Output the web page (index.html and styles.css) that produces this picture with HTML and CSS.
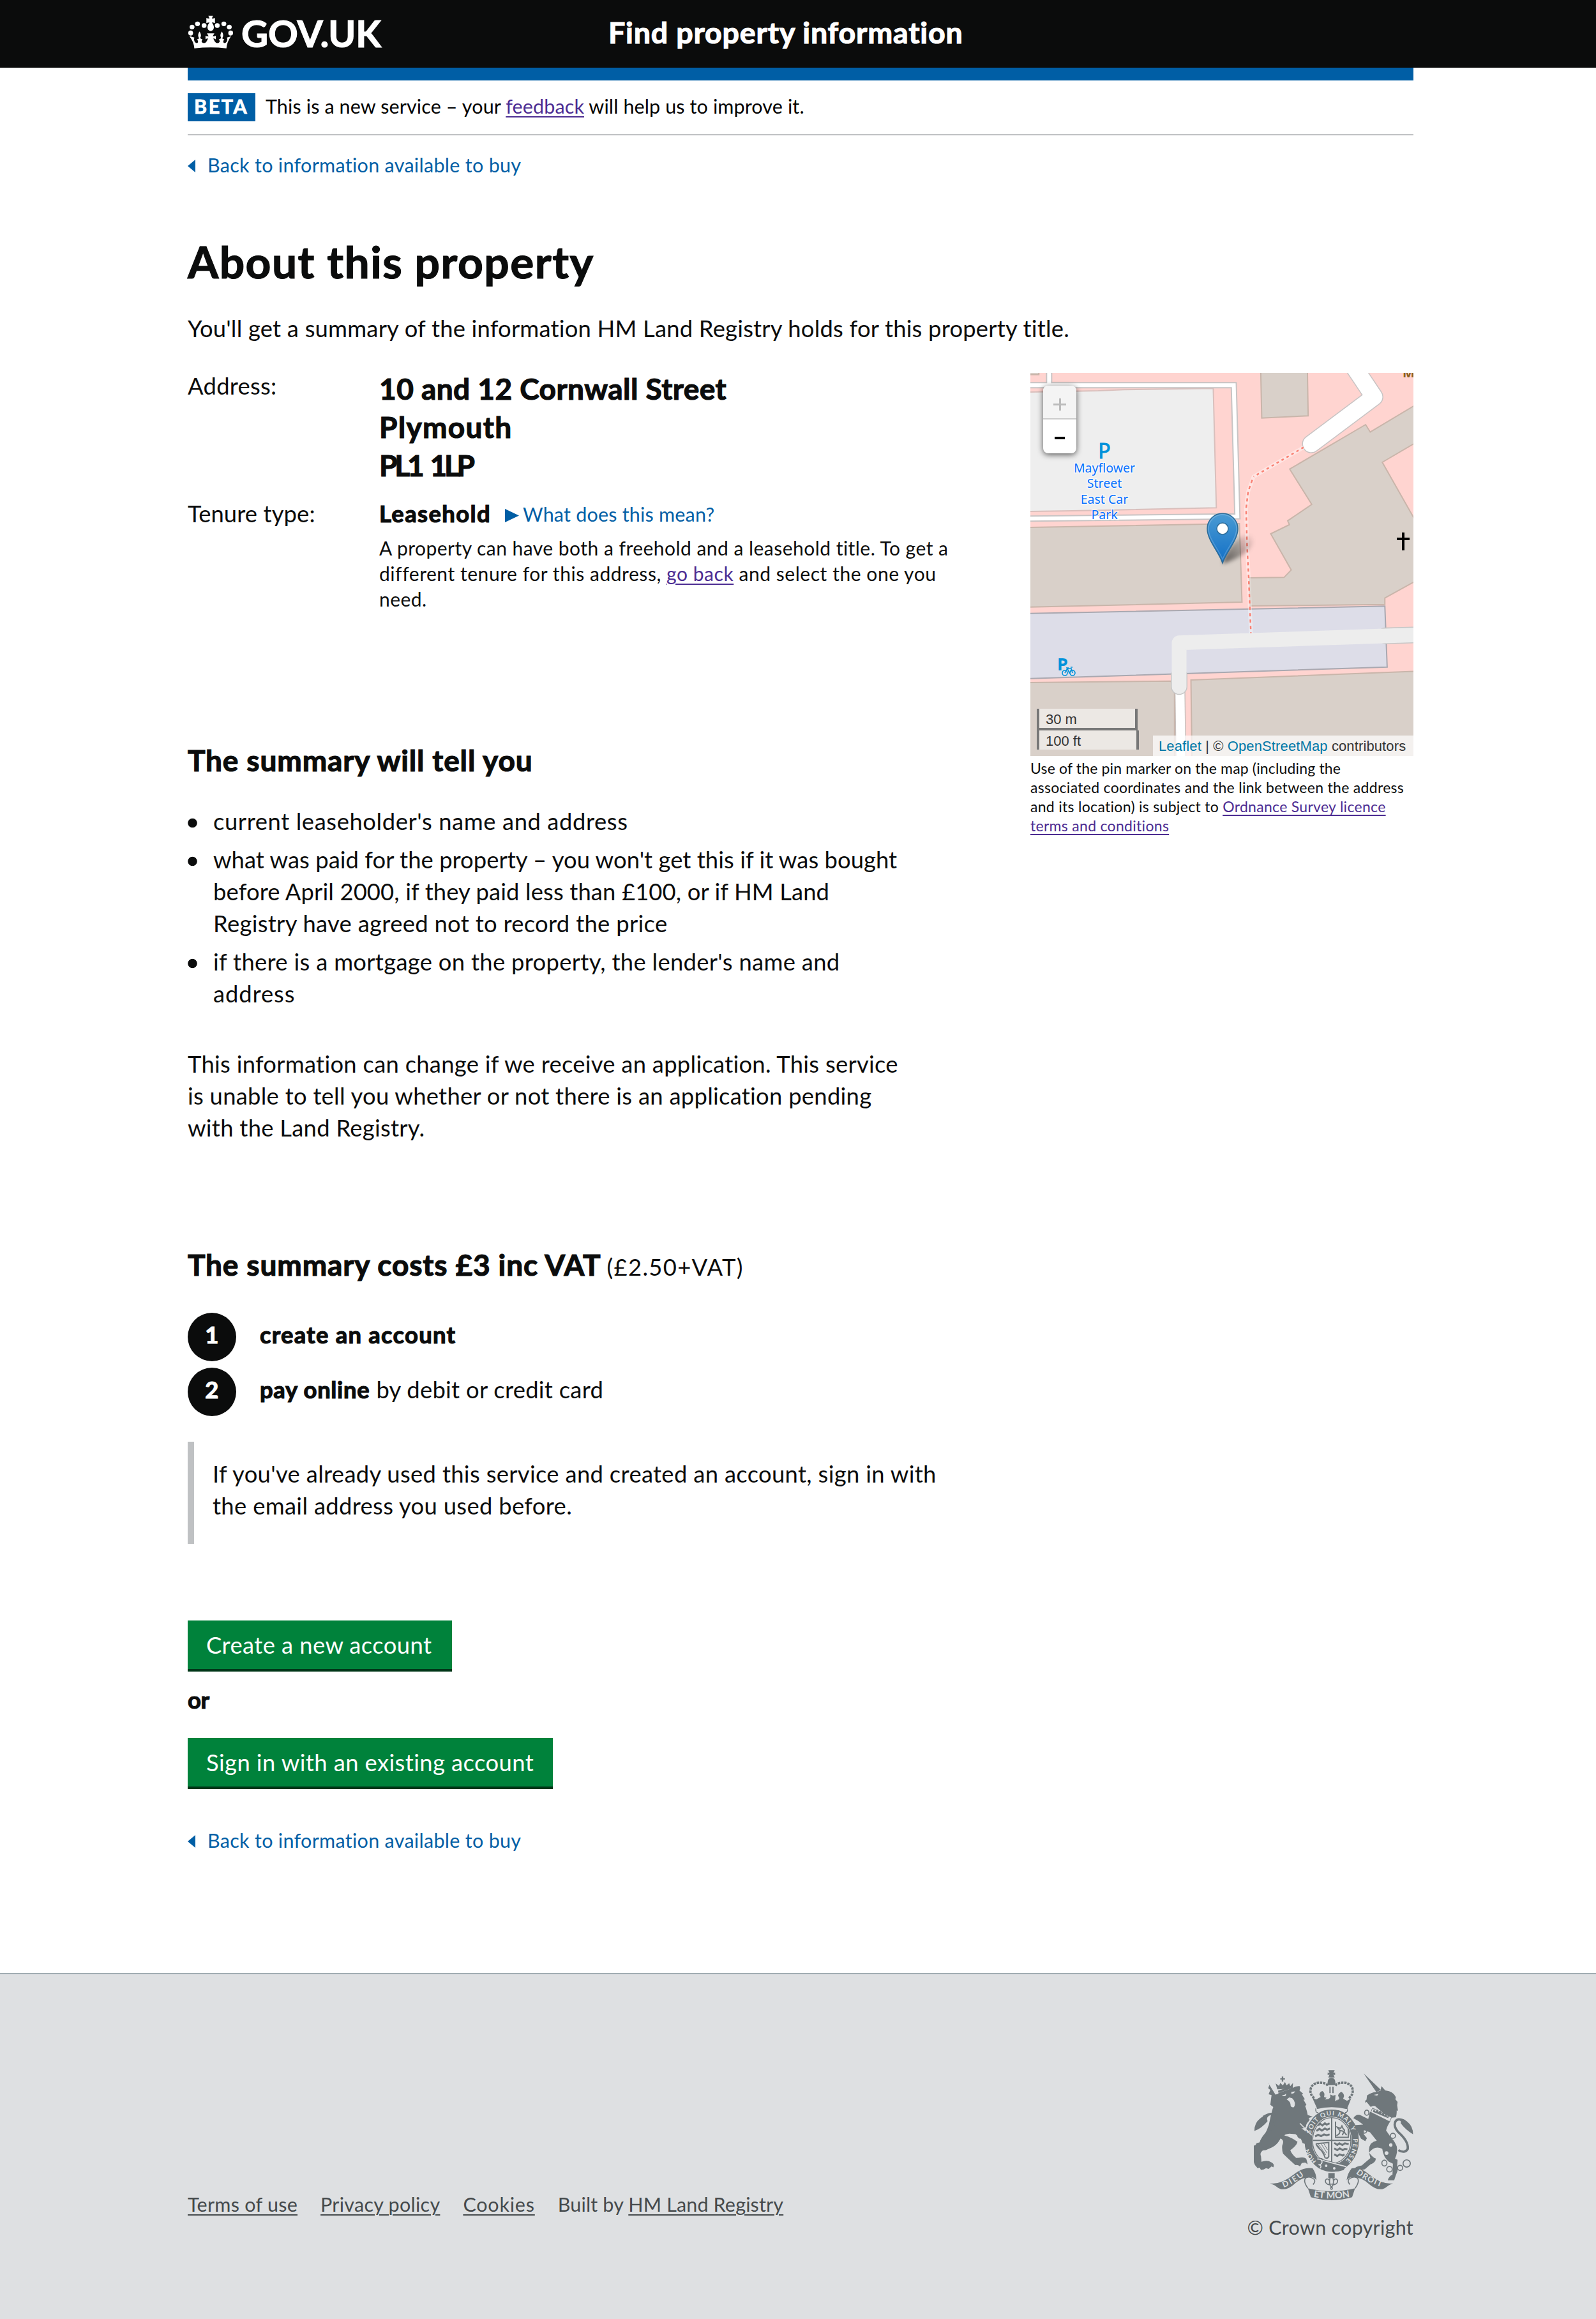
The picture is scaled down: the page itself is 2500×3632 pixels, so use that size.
FILE: index.html
```html
<!DOCTYPE html>
<html lang="en">
<head>
<meta charset="utf-8">
<title>Find property information - GOV.UK</title>
<link rel="stylesheet" href="styles.css">
</head>
<body>
<header class="header">
  <div class="logo">
    <svg class="crown" viewBox="34 73 156 156" preserveAspectRatio="none" fill="#fff">
      <path d="M104 75h16l-4 13q7 1 11-3v25q-6-4-11-3 8 14 7 25-1 12-11 15-10-3-11-15-1-11 7-25-5-1-11 3V85q4 4 11 3z"/>
      <ellipse cx="89" cy="121" rx="8.500" ry="11"/><ellipse cx="135" cy="121" rx="8.500" ry="11"/>
      <ellipse cx="66" cy="113" rx="8.500" ry="11"/><ellipse cx="158" cy="113" rx="8.500" ry="11"/>
      <ellipse cx="47" cy="128" rx="8.500" ry="11"/><ellipse cx="177" cy="128" rx="8.500" ry="11"/>
      <ellipse cx="42" cy="156" rx="8.500" ry="12"/><ellipse cx="182" cy="156" rx="8.500" ry="12"/>
      <path d="M41 172l14 5q-3 10 1 20 5 10 11 4 3-8-3-14l8-6q-8-14 1-32 9 18 2 31l9 7q-7 7-1 14 9 7 15-6l5-13q-6 0-9 4v-18q5 5 11 3l-6-13h26l-6 13q6 2 11-3v18q-3-4-9-4l5 13q6 13 15 6 6-7-1-14l9-7q-7-13 2-31 9 18 1 32l8 6q-6 6-3 14 6 6 11-4 4-10 1-20l14-5q-14 25-16 56-55-8-112 0-2-31-17-56z"/>
    </svg>
    <span class="wordmark">GOV.UK</span>
  </div>
  <span class="service">Find property information</span>
</header>

<main class="main">
  <div class="phase">
    <strong class="tag">BETA</strong>
    <span>This is a new service – your <a class="visited" href="#">feedback</a> will help us to improve it.</span>
  </div>
  <a class="back" href="#"><svg class="tri" viewBox="0 0 12 20"><path d="M0 10L12 0v20z"/></svg>Back to information available to buy</a>

  <h1 class="title">About this property</h1>
  <p class="lede">You'll get a summary of the information HM Land Registry holds for this property title.</p>

  <div class="overview">
    <dl class="facts">
      <dt>Address:</dt>
      <dd class="address">
        <span class="ln">10 and 12 Cornwall Street</span>
        <span class="ln town">Plymouth</span>
        <span class="ln postcode">PL1 1LP</span>
      </dd>
      <dt class="snug">Tenure type:</dt>
      <dd>
        <div class="tenure"><strong class="kind">Leasehold</strong><a class="what" href="#"><svg class="tri-r" viewBox="0 0 22 21"><path d="M0 0l22 10.500L0 21z"/></svg>What does this mean?</a></div>
        <p class="note">
          <span class="ln">A property can have both a freehold and a leasehold title. To get a</span>
          <span class="ln wide">different tenure for this address, <a class="visited" href="#">go back</a> and select the one you</span>
          <span class="ln">need.</span>
        </p>
      </dd>
    </dl>

    <aside class="side">
      <div class="map">
        <svg class="tiles" viewBox="0 0 600 600">
          <defs>
            <linearGradient id="pin" x1="0" y1="0" x2="0" y2="1"><stop offset="0" stop-color="#4a9bd3"/><stop offset="1" stop-color="#126fc6"/></linearGradient>
            <linearGradient id="shade" x1="0" y1="1" x2="1" y2="0"><stop offset="0" stop-color="#000" stop-opacity=".6"/><stop offset="1" stop-color="#000" stop-opacity="0"/></linearGradient>
            <filter id="soft"><feGaussianBlur stdDeviation="3"/></filter>
          </defs>
          <rect width="600" height="600" fill="#ffd4d0"/>
          <g class="geo" transform="scale(.40178 .33333) translate(-35 -42)">
            <path class="park" d="M20 132L300 126 400 121 748 115 760 676 200 690 20 693z"/>
            <g class="bld">
              <path d="M20 30H68V50H20z"/>
              <path d="M933 30H1115L1118 244 937 254z"/>
              <path d="M1540 190L1360 320 1342 285 1046 494 1132 660 1038 737 1045 755 972 798 1052 968 1024 1003 890 1005 892 1137 1417 1130V1100L1540 1018V745L1407 462 1540 368z"/>
              <path d="M20 768L850 750 860 1119 20 1143z"/>
              <path d="M20 1497L583 1490 597 1540V1860H20z"/>
              <path d="M661 1485L1540 1444V1860H665z"/>
            </g>
            <path class="plaza" d="M20 1173L1417 1138 1426 1424 20 1479z"/>
            <g class="road">
              <path class="c9" d="M20 100H828L842 716 20 727M108 30V95"/>
              <path class="c6" d="M20 100H828L842 716 20 727M108 30V95"/>
              <path class="c28" d="M1300 20L1375 155 1130 376"/>
              <path class="c26" d="M1300 20L1375 155 1130 376"/>
              <path class="c18" d="M618 1535L622 1860"/>
              <path class="c15" d="M618 1525L622 1860"/>
              <path class="halo" d="M1100 392L905 530 884 600 876 680 880 860 886 1000 895 1270"/>
              <path class="foot-a" d="M1100 392L905 530"/>
              <path class="foot-b" d="M900 545L884 600 876 680 880 860 886 1000 895 1275"/>
              <path class="g25" d="M1540 1273L1420 1277M615 1465V1516"/>
              <path class="g23" d="M1540 1273L615 1310V1516"/>
            </g>
          </g>
          <g class="church"><path d="M584 250v28M574 260h20"/></g>
          <text class="poi" x="583" y="7">M</text>
          <g class="label">
            <text class="p" x="116" y="134">P</text>
            <text x="116" y="156">Mayflower</text><text x="116" y="180">Street</text><text x="116" y="205">East Car</text><text x="116" y="229">Park</text>
          </g>
          <text class="p2" x="42" y="466">P</text>
          <g class="bike"><circle cx="54" cy="470" r="4"/><circle cx="66" cy="470" r="4"/><path d="M54 470l4-7h6l2 7M58 463l3 7 4-6M56 462h4M63 461h3"/></g>
          <path d="M301 299q6-25 28-42 22-8 20 8-6 20-48 34z" fill="url(#shade)" filter="url(#soft)"/>
          <path d="M301 298C295 280 277 262 277 244a24 24 0 0 1 48 0C325 262 307 280 301 298z" fill="url(#pin)" stroke="#2e6c97" stroke-width="1.500"/>
          <path d="M301 292C295 276 279 260 279 244a22 22 0 0 1 44 0C323 260 307 276 301 292z" fill="none" stroke="#fff" stroke-opacity=".2" stroke-width="1.500"/>
          <circle cx="301" cy="244" r="9" fill="#fff" stroke="#2e6c97" stroke-width="1.500"/>
        </svg>
        <div class="zoomer"><span class="plus"></span><span class="minus"><i></i></span></div>
        <div class="scale"><span class="m">30 m</span><span class="ft">100 ft</span></div>
        <div class="credit"><a href="#">Leaflet</a> | © <a href="#">OpenStreetMap</a> contributors</div>
      </div>
      <p class="caption">
        <span class="ln first">Use of the pin marker on the map (including the</span>
        <span class="ln">associated coordinates and the link between the address</span>
        <span class="ln">and its location) is subject to <a class="visited" href="#">Ordnance Survey licence</a></span>
        <span class="ln"><a class="visited" href="#">terms and conditions</a></span>
      </p>
    </aside>
  </div>

  <section class="tell">
    <h2>The summary will tell you</h2>
    <ul class="bullets">
      <li><span class="ln holder">current leaseholder's name and address</span></li>
      <li><span class="ln paid">what was paid for the property – you won't get this if it was bought</span>
        <span class="ln before">before April 2000, if they paid less than £100, or if HM Land</span>
        <span class="ln">Registry have agreed not to record the price</span></li>
      <li><span class="ln">if there is a mortgage on the property, the lender's name and</span>
        <span class="ln tail">address</span></li>
    </ul>
    <p class="change">
      <span class="ln">This information can change if we receive an application. This service</span>
      <span class="ln">is unable to tell you whether or not there is an application pending</span>
      <span class="ln">with the Land Registry.</span>
    </p>
  </section>

  <section class="costs">
    <h2>The summary costs £3 inc VAT<small>(£2.50+VAT)</small></h2>
    <ol class="steps">
      <li><b class="num">1</b><strong class="create-step">create an account</strong></li>
      <li><b class="num">2</b><strong class="pay-step">pay online</strong><span class="rest">by debit or credit card</span></li>
    </ol>
    <div class="inset">
      <span class="ln">If you've already used this service and created an account, sign in with</span>
      <span class="ln">the email address you used before.</span>
    </div>
  </section>

  <div class="actions">
    <a class="btn create" href="#">Create a new account</a>
    <strong class="or">or</strong>
    <a class="btn signin" href="#">Sign in with an existing account</a>
  </div>
  <a class="back last" href="#"><svg class="tri" viewBox="0 0 12 20"><path d="M0 10L12 0v20z"/></svg>Back to information available to buy</a>
</main>

<footer class="footer">
  <nav class="links">
    <a href="#">Terms of use</a>
    <a href="#">Privacy policy</a>
    <a class="cookies" href="#">Cookies</a>
    <span class="built">Built by <a href="#">HM Land Registry</a></span>
  </nav>
  <div class="copy">
    <svg class="arms" viewBox="102 65 750 613">
      <g class="fill">
        <!-- lion -->
        <path d="M215 163l68-23 2 9-67 24z"/>
        <path d="M212 156l-8-28 16 12 6-14 12 12 10-17 7 16 13-10 5 14 13-15-2 26z"/>
        <path d="M233 96h7v8h8v6h-8v10h-7v-10h-7v-6h7z"/>
        <path d="M203 181q12-2 16-8l66-24q14-9 32-8 5 10-1 20l18 16-6 4 14 22-7 2 14 24-6 6q8 18 12 42l24 8-20 6q8 6 2 14-16 16-14 28-14 10-22 6 30 20 56 44 8 26 6 44l-10-2-6 12-12-8-8 8q-6-12-2-22l-18-6-8-20q-14 0-18-16l-8-6-28-2q-20 2-24 8 36 10 62 30-4 18-34 40 8 20 28 36l24-2q18-2 24 8l6 24-12-8-16 2-8 16q-12-10-22-6-34-30-58-54-6-18-4-38 12-26-8-34-22 46-78 54-22 10-14 30 2 18 2 26 28-10 46 2 18 8 10 24l-8-4-14 12-12-4q-10 8-24 8l-6-10-10 2-12-14q-10-22-10-42l4-50 8-2 6-10 16-4q40-60 46-104 8-40 16-62l-14-10 6-46-14-4 8-20-10-8 6-16q-2-6-6-10z"/>
        <path d="M104 352q0-38 26-58 22-20 46-14-18 6-10 26-28 34-62 46z"/>
        <!-- unicorn -->
        <path d="M618 81l82 78-22 10z"/>
        <path d="M632 205l2-20q20-14 42-16l22-6 4-22 18 20q40 4 50 32l-2 10 10 12-2 16 4 26-6-2q0 22-4 32l-32 4-66-56q-12-4-20 4l-20-24-8 4 4-12z"/>
        <path d="M648 262l96 44q-16 24-20 44l24 34q14 12 26 40 6 30-8 58l12 6-2 28 2 24q-6 14-16 44l-30 0q6-20 22-26l2-52-20-10q-26-22-30-60-36-18-62 18 18 24 32 28-2 20-26 28l-26 22-28 6-26-4q10-16 40-20 28-24 40-34-14-44 2-68 14-12 28-14l-32-40-28-10-2 18 16 20-8 14-20-12-18-36-14-10-20-2q4-14 28-16l34-2q-22-18-46-30 12-20 30-16l40 20z"/>
        <path d="M851 368q0-38-28-60-18-16-42-12 16 8 12 20 22 30 58 52z"/>
        <!-- royal crown -->
        <path d="M452 66h30l-6 14 8-3v12l-8-3 6 14h-30l6-14-9 3V77l9 3z"/>
        <path d="M448 130q0-28 19-28t19 28l-4 6h-30z"/><path d="M457 144h6v30h-6zM471 144h6v30h-6z"/>
        <path d="M376 194l18 10 22-12-6-12q2-12 14-16 14 8 8 28l12 4-8 8 16-2q14-6 8-22l14 6 12-4-2 30q10-8 14-8l-4 8 10-14-6-12q2-12 16-18 12 8 12 20l-4 12 18 10 20-12-20 50H400z"/>
        <path d="M401 238q66-12 132 0l-2 10q-64-14-128 0z"/>
        <!-- scrolls -->
        <path d="M178 598q50 8 110-40 50-40 90-30 18 24 18 56-12-18-34-14-38 2-70 32-30 28-62 24-14-4-30-18z"/>
        <path d="M756 598q-50 8-110-40-44-40-84-30-20 24-24 56 14-18 36-14 38 2 70 32 32 28 62 24 14-4 30-18z"/>
        <path d="M356 622q110 28 222 0l-14 42q-96 28-194 0z"/>
        <path d="M452 550h30v24h-30z"/>
      </g>
      <g class="line">
        <path d="M146 286q44-26 54-4 8 36-28 70-50 50-38 80 20 16 50-14" stroke-width="11"/>
        <path d="M812 306q-36-20-46 6-6 20 14 44 50 44 46 80-14 24-44 6" stroke-width="11"/>
        <path d="M386 197a48 42 0 0 1-18-34c0-50 76-44 82-22M549 197a48 42 0 0 0 18-34c0-50-76-44-82-22" stroke-width="11" stroke-dasharray="11 4"/>
        <path d="M394 246q-4 18 10 20M541 246q4 18-10 20" stroke-width="5"/>
        <ellipse cx="468" cy="397" rx="111" ry="130" stroke-width="34"/>
        <path d="M356 622q-20-28-14-44 6-12 24-8 36 10 14 34M578 622q20-28 14-44-6-12-24-8-36 10-14 34" stroke-width="5"/>
        <path d="M467 562q14 16 7 44l-7 12-7-12q-7-28 7-44zM460 606q-22-4-22-20 6-16 18-2M474 606q22-4 22-20-6-16-18-2M452 602h30" stroke-width="5"/>
        <circle cx="467" cy="622" r="5" stroke-width="4"/>
        <g stroke-width="5"><ellipse cx="633" cy="266" rx="10" ry="12"/><ellipse cx="622" cy="348" rx="12" ry="14"/><circle cx="756" cy="375" r="12"/><ellipse cx="716" cy="503" rx="12" ry="14"/><circle cx="740" cy="532" r="13"/><circle cx="790" cy="526" r="12"/><circle cx="821" cy="505" r="17"/></g>
      </g>
      <!-- shield quarters -->
      <ellipse cx="468" cy="397" rx="93" ry="112" class="cut"/>
      <g class="line">
        <ellipse cx="468" cy="397" rx="90" ry="108" stroke-width="4"/>
        <path d="M468 290v212M378 396h180" stroke-width="6"/>
        <g stroke-width="9"><path d="M404 326l10-8 10 8 12-10 8 6 14-6M396 352l14-10 12 8 14-10 10 6 14-6M390 378l14-8 14 6 14-8 12 4 14-4"/><path d="M480 408l14 10 10-8 14 8 12-8 18 4M480 434l14 8 12-8 14 8 10-6 12 2M480 462l14 8 12-8 14 6 8-6"/></g>
        <path d="M486 308v74h60V340M490 374q20-8 16-24l-12-16 16 6 6-12 6 14q10 6 4 14l12 16M508 350l18 4-8 18" stroke-width="6"/>
        <path d="M394 412l60-6v66q-6 12-18 6M394 412q8 20 26 32 12 12 16 34" stroke-width="6"/>
        <path d="M406 414l34 50M418 412l28 44M430 410l18 30M402 418l34 56" stroke-width="3"/>
      </g>
      <g class="fill"><path d="M402 482q20-8 26 4l110 28-14 22q-60 20-122-12-12-16 0-42z"/></g>
      <g class="cutline">
        <path d="M400 484q26 0 22 18-6 12-16 8 18 4 8 18M318 316l56 56M424 490l66 18 46 12" stroke-width="5"/>
        <circle cx="442" cy="516" r="6" class="cut"/><circle cx="480" cy="528" r="6" class="cut"/>
      </g>
      <g class="cut">
        <path d="M234 184q12 0 20-8l-2 10q-12 6-18-2zM278 168l18-2-6 8-12 4zM256 204l12-10 14 4 8 10q10 20 0 32-16 4-16-14-2-14-18-22z"/>
        <path d="M666 182l22-4-6 8z"/><circle cx="746" cy="418" r="8"/><circle cx="726" cy="456" r="9"/>
        <path d="M394 250l4 14q70-26 138 0l6-14q-74-20-148 0z"/>
      </g>
      <g class="collar"><path d="M660 244l90 44-10 20-88-44z"/><path class="fill" d="M662 262l4-14 8 12 8-10 6 14 10-8 4 16 10-8 4 14 10-8 2 14 10-4-4 12z"/></g>
      <defs>
        <path id="garter-l" d="M396 494A101 119 0 0 1 358 428"/>
        <path id="garter" d="M370 366A101 119 0 0 1 568 386"/>
        <path id="garter-r" d="M568 388A101 119 0 0 1 528 496"/>
        <path id="dieu" d="M242 618Q290 602 348 554"/>
        <path id="droit" d="M582 552Q630 590 706 617"/>
        <path id="mon" d="M382 662Q468 678 556 662"/>
      </defs>
      <g class="motto">
        <text font-size="30"><textPath href="#garter-l" textLength="70">HON</textPath></text>
        <text font-size="30"><textPath href="#garter" textLength="270">SOIT QUI MAL Y</textPath></text>
        <text font-size="30"><textPath href="#garter-r" textLength="112">PENSE</textPath></text>
        <text font-size="38"><textPath href="#dieu" textLength="112">DIEU</textPath></text>
        <text font-size="38"><textPath href="#droit" textLength="134">DROIT</textPath></text>
        <text font-size="44"><textPath href="#mon" textLength="172">ET MON</textPath></text>
      </g>
    </svg>
    <span class="rights">© Crown copyright</span>
  </div>
</footer>
</body>
</html>
```
FILE: styles.css
```css
* { box-sizing: border-box; }
body { margin: 0; background: #fff; color: #0b0c0c; font: 400 36.4px/50px Lato, sans-serif; font-variant-ligatures: none; letter-spacing: 0.27px; white-space: nowrap; }
h1, h2, p, ul, ol, dl, dd { margin: 0; padding: 0; list-style: none; }
h1, h2, strong, b { font-weight: 700; -webkit-text-stroke: 1.2px currentColor; }
svg { display: block; flex: none; }
.ln { display: block; }
.visited { color: #4c2c92; }
a { text-decoration-thickness: 2px; text-underline-offset: 4px; }

.header { height: 106px; background: #0b0c0c; color: #fff; display: flex; padding-left: 295px; font-weight: 700; -webkit-text-stroke: 1.2px #fff; }
.logo { width: 658px; display: flex; }
.crown { width: 70px; height: 52px; margin: 24px 13px 0 0; }
.wordmark { font-size: 58px; line-height: 70px; margin-top: 17px; letter-spacing: -0.1px; }
.service { font-size: 46.5px; line-height: 60px; margin-top: 20px; letter-spacing: 0.85px; }

.main { width: 1920px; margin-left: 294px; display: flex; flex-direction: column; }
.phase { height: 106px; border-top: 20px solid #005ea5; border-bottom: 2px solid #bfc1c3; padding-top: 20px; display: flex; gap: 16px; font-size: 30.5px; line-height: 40px; letter-spacing: 0.12px; color: #000; }
.tag { width: 106px; height: 44px; padding-left: 10px; background: #005ea5; color: #fff; line-height: 41px; letter-spacing: 2.6px; -webkit-text-stroke: 0.8px #fff; }
.back { margin-top: 26px; display: flex; gap: 19px; color: #005ea5; text-decoration: none; font-size: 30.5px; line-height: 40px; letter-spacing: 0.3px; }
.tri { width: 12px; height: 20px; margin-top: 12px; fill: #005ea5; }
.title { margin-top: 93px; font-size: 69.5px; line-height: 76px; letter-spacing: 1.45px; }
.lede { margin-top: 42px; letter-spacing: 0.2px; }

.overview { margin-top: 40px; height: 582px; display: grid; grid-template-columns: 1320px 600px; }
.facts { display: grid; grid-template-columns: 300px 1fr; align-content: start; row-gap: 20px; }
.snug { letter-spacing: 0.1px; }
.address { font-size: 46px; line-height: 60px; font-weight: 700; letter-spacing: 0.45px; -webkit-text-stroke: 1.2px currentColor; }
.town { letter-spacing: 1.3px; }
.postcode { letter-spacing: -4.2px; word-spacing: 6px; }
.tenure { display: flex; height: 50px; }
.kind { letter-spacing: 1.4px; }
.what { display: flex; gap: 6px; margin-left: 22px; color: #005ea5; text-decoration: none; font-size: 30.5px; line-height: 53px; letter-spacing: 0.2px; }
.tri-r { width: 22px; height: 21px; margin-top: 18px; fill: #005ea5; }
.note { margin-top: 9px; font-size: 30px; line-height: 40px; letter-spacing: 0.47px; }
.note .wide { letter-spacing: 0.55px; }

.side { padding-top: 5px; }
.map { position: relative; width: 600px; height: 600px; overflow: hidden; letter-spacing: 0; }
.tiles { width: 600px; height: 600px; }
.geo path { vector-effect: non-scaling-stroke; }
.park { fill: #eee; stroke: #d9bfbc; stroke-width: 2; }
.bld path { fill: #d9d0c9; stroke: #c9b5aa; stroke-width: 2; }
.plaza { fill: #dddde8; stroke: #a9a8b0; stroke-width: 2; }
.road path { fill: none; stroke-linejoin: round; }
.road .c9 { stroke: #c8c4c4; stroke-width: 10; stroke-linejoin: miter; }
.road .c6 { stroke: #fff; stroke-width: 6; stroke-linejoin: miter; }
.road .c28 { stroke: #c8c4c4; stroke-width: 29; stroke-linecap: round; }
.road .c26 { stroke: #fff; stroke-width: 26; stroke-linecap: round; }
.road .c18 { stroke: #c8c0bd; stroke-width: 17; }
.road .c15 { stroke: #fff; stroke-width: 14; }
.road .halo { stroke: #fff; stroke-opacity: .4; stroke-width: 6; }
.road .foot-a { stroke: #fa8072; stroke-width: 2.5; stroke-dasharray: 4 5; }
.road .foot-b { stroke: #fa8072; stroke-width: 2.5; stroke-dasharray: 5 5; }
.road .g25 { stroke: #c6c6c6; stroke-width: 26; stroke-linecap: round; }
.road .g23 { stroke: #ededed; stroke-width: 23; stroke-linecap: round; }
.church path { stroke: #000; stroke-width: 4; }
.poi { font: 700 20px "Noto Sans", sans-serif; fill: #8a6020; }
.label text { font: 400 19.5px "Noto Sans", sans-serif; fill: #0a72ff; text-anchor: middle; stroke: #fff; stroke-opacity: .6; stroke-width: 3px; paint-order: stroke; }
.label .p { font-size: 32px; fill: #0092da; stroke: #0092da; stroke-opacity: 1; stroke-width: 1px; }
.p2 { font: 700 27px "Noto Sans", sans-serif; fill: #0092da; }
.bike { fill: none; stroke: #0092da; stroke-width: 1.6; }
.zoomer { position: absolute; left: 20px; top: 20px; width: 52px; height: 106px; border-radius: 8px; overflow: hidden; background: #fff; box-shadow: 0 2px 10px rgba(0,0,0,.65); }
.zoomer span { display: flex; height: 53px; align-items: center; justify-content: center; }
.zoomer .plus { background: linear-gradient(#bbb, #bbb) center 28px / 20px 3px no-repeat, linear-gradient(#bbb, #bbb) center 20px / 3px 19px no-repeat, #f4f4f4; border-bottom: 2px solid #ccc; }
.minus i { width: 16px; height: 4px; background: #000; margin-top: 4px; }
.scale { position: absolute; left: 10px; top: 526px; width: 160px; color: #333; font: 22px/30px "Liberation Sans", sans-serif; }
.scale span { display: block; padding-left: 10px; border: 4px solid #777; border-top: 0; background: rgba(255,255,255,.5); }
.scale .m { width: 158px; height: 34px; line-height: 33px; }
.scale .ft { height: 30px; border-bottom: 0; line-height: 34px; }
.credit { position: absolute; right: 0; bottom: 0; width: 408px; height: 32px; padding-left: 9px; background: rgba(255,255,255,.7); color: #333; font: 22px/33px "Liberation Sans", sans-serif; letter-spacing: 0.12px; }
.credit a { color: #0078a8; text-decoration: none; }
.caption { margin-top: 4px; font-size: 23px; line-height: 30px; letter-spacing: 0.3px; }
.caption .first { letter-spacing: 0.16px; }

h2 { height: 60px; font-size: 46px; line-height: 60px; letter-spacing: 0.87px; }
.bullets { margin-top: 40px; display: flex; flex-direction: column; gap: 10px; letter-spacing: 0.3px; }
.bullets li { padding-left: 40px; background: radial-gradient(circle at 7.5px 28px, #0b0c0c 6.8px, transparent 7.6px); }
.holder { letter-spacing: 0.58px; }
.paid { letter-spacing: 0.04px; }
.before { letter-spacing: 0.12px; }
.tail { letter-spacing: 0.9px; }
.change { margin-top: 60px; }
.costs { margin-top: 160px; }
small { margin-left: 9px; font-size: 36.4px; line-height: 1; font-weight: 400; letter-spacing: 1.32px; -webkit-text-stroke: 0; }
.steps { margin-top: 45px; display: flex; flex-direction: column; gap: 10px; }
.steps li { height: 76px; display: flex; padding-top: 9px; }
.num { width: 76px; height: 76px; margin: -9px 37px 0 0; border-radius: 50%; background: #0b0c0c; color: #fff; text-align: center; line-height: 68px; }
.create-step { letter-spacing: 1.26px; }
.pay-step { letter-spacing: 0.7px; }
.rest { margin-left: 10px; }
.inset { margin-top: 40px; height: 160px; border-left: 10px solid #bfc1c3; padding: 25px 0 0 29px; letter-spacing: 0.32px; }
.actions { margin-top: 120px; display: flex; flex-direction: column; align-items: flex-start; letter-spacing: 0.4px; }
.btn { height: 80px; padding: 13px 0 0 29px; background: #00823b; border-bottom: 4px solid #003618; color: #fff; text-decoration: none; }
.create { width: 414px; }
.signin { width: 572px; }
.or { margin: 19px 0 35px; letter-spacing: -0.4px; }
.last { margin-top: 60px; }

.footer { margin-top: 188px; height: 542px; border-top: 2px solid #a1acb2; background: #dee0e2; color: #454a4c; padding: 150px 286px 0 294px; display: flex; justify-content: space-between; font-size: 30.5px; line-height: 40px; letter-spacing: 0.27px; }
.footer a { color: inherit; }
.links { display: flex; gap: 36px; margin-top: 190px; }
.cookies { letter-spacing: 0.8px; }
.built { letter-spacing: 0.15px; }
.copy { display: flex; flex-direction: column; align-items: flex-end; }
.arms { width: 250px; height: 204px; margin-bottom: 22px; }
.arms .fill { fill: #6f777b; }
.arms .line { fill: none; stroke: #6f777b; }
.arms .cut { fill: #dee0e2; stroke: none; }
.arms .cutline { fill: none; stroke: #dee0e2; }
.collar path { fill: #dee0e2; stroke: #6f777b; stroke-width: 3; }
.collar .fill { fill: #6f777b; stroke: none; }
.motto { font-family: Lato, sans-serif; font-weight: 700; fill: #dee0e2; letter-spacing: 0; }
```
